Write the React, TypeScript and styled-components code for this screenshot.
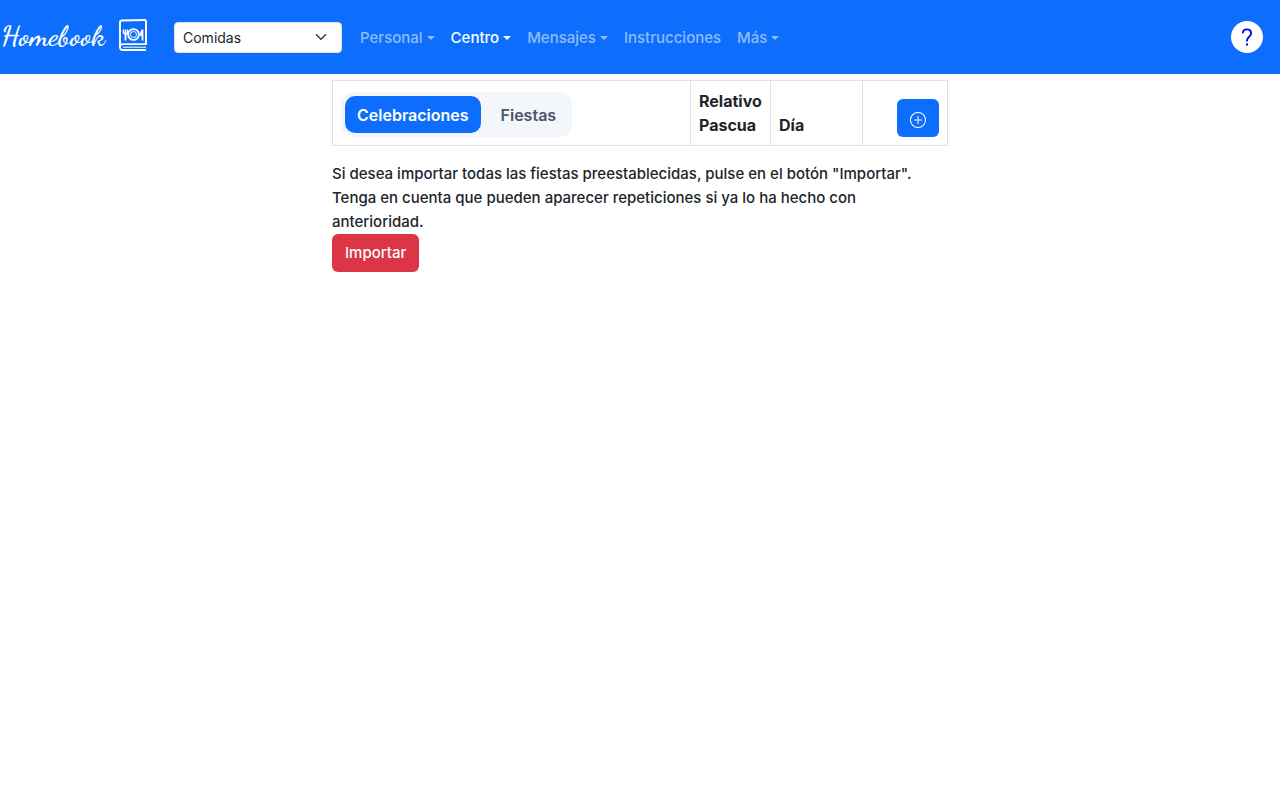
import React, { useState } from "react";
import styled, { createGlobalStyle } from "styled-components";

const GlobalStyle = createGlobalStyle`
  *, *::before, *::after { box-sizing: border-box; }
  body {
    margin: 0;
    background: #fff;
    color: #212529;
    font-family: Inter, "Liberation Sans", sans-serif;
    font-size: 15px;
    line-height: 24px;
  }
  button, select { font: inherit; }
`;

const Header = styled.header`
  display: flex;
  align-items: center;
  min-height: 74px;
  padding-right: 17px;
  background: #0d6efd;
`;

const Brand = styled.a`
  display: flex;
  align-items: center;
  gap: 14px;
  width: 174px;
  padding-left: 1px;
  flex-shrink: 0;
  color: #fff;
  text-decoration: none;
`;

const Wordmark = styled.span`
  width: 103px;
  padding-bottom: 2px;
  font-family: "Dancing Script", "Liberation Serif", cursive;
  font-size: 29px;
  font-weight: 600;
  white-space: nowrap;
`;

const SelectWrap = styled.div`
  position: relative;
  width: 168px;
  margin-right: 10px;
  svg {
    position: absolute;
    right: 15px;
    top: 9px;
    pointer-events: none;
  }
`;

const Select = styled.select`
  display: block;
  width: 100%;
  height: 31px;
  padding: 1px 36px 0 8px;
  border: 1px solid #dee2e6;
  border-radius: 4px;
  appearance: none;
  background: #fff;
  color: #212529;
  font-size: 14px;
`;

const Nav = styled.nav`
  display: flex;
  flex: 1;
`;

const NavLink = styled.a<{ $active?: boolean; $caret?: boolean }>`
  display: flex;
  align-items: center;
  gap: 4px;
  padding: 9px 8px 7px;
  color: ${(p) => (p.$active ? "#fff" : "rgba(255, 255, 255, 0.55)")};
  font-weight: 500;
  text-decoration: none;
  &::after {
    content: "";
    display: ${(p) => (p.$caret ? "block" : "none")};
    border: 4px solid transparent;
    border-top-color: currentColor;
    border-bottom: 0;
  }
`;

const HelpLink = styled.a`
  display: grid;
  place-items: center;
  width: 32px;
  height: 32px;
  border-radius: 50%;
  background: #fff;
  color: #00e;
`;

const Main = styled.main`
  width: 50%;
  min-width: 600px;
  margin: 0 auto;
  padding: 6px 12px;
`;

const Table = styled.table`
  width: 100%;
  border-collapse: collapse;
  margin-bottom: 16px;
  font-size: 16px;
`;

const Th = styled.th<{ $width?: number; $align?: string }>`
  width: ${(p) => (p.$width ? `${p.$width}px` : "auto")};
  padding: 8px;
  border: 1px solid #dee2e6;
  text-align: ${(p) => p.$align ?? "left"};
  vertical-align: bottom;
  font-weight: 700;
`;

const Segmented = styled.div`
  display: inline-flex;
  vertical-align: bottom;
  gap: 8px;
  padding: 4px;
  border-radius: 12px;
  background: #f3f6fb;
`;

const Segment = styled.button<{ $active: boolean }>`
  height: 37px;
  padding: 0 12px;
  border: 0;
  border-radius: 10px;
  background: ${(p) => (p.$active ? "#0d6efd" : "transparent")};
  color: ${(p) => (p.$active ? "#fff" : "#4a5568")};
  font-weight: 600;
`;

const Button = styled.button<{ $danger?: boolean }>`
  display: inline-flex;
  align-items: center;
  height: 38px;
  padding: 0 13px;
  border: 0;
  border-radius: 6px;
  background: ${(p) => (p.$danger ? "#dc3545" : "#0d6efd")};
  color: #fff;
  font-weight: 500;
  vertical-align: bottom;
`;

const AddButton = styled(Button)`
  padding-top: 4px;
`;

const Note = styled.p`
  margin: 0;
  padding-right: 24px;
  font-weight: 500;
`;

const BookLogo = () => (
  <svg width="30" height="38" viewBox="0 0 30 38" fill="none" stroke="#fff" strokeWidth="2" aria-hidden="true">
    <path d="M2 29V4.500q0-2 2-2L27 2Q28 2 28 3.500V26" strokeLinecap="round" />
    <path d="M28 26.200H5q-3 0-3 3t3 2.800H28" strokeWidth="1.800" />
    <path d="M5 29.200H28" strokeWidth="1" />
    <circle cx="15.500" cy="16.500" r="5.400" strokeWidth="1.900" />
    <circle cx="15.500" cy="16.500" r="3" strokeWidth="1" />
    <path d="M7.500 15v7.500M24.500 11.500v11M24.500 12q-2.500 3-1 6" strokeWidth="1.800" />
    <path d="M5.500 11.500v2.500q0 2 2 2t2-2v-2.500M7.500 11.500v4" strokeWidth="1.400" />
  </svg>
);

const menu = [
  { label: "Personal", caret: true },
  { label: "Centro", caret: true, active: true },
  { label: "Mensajes", caret: true },
  { label: "Instrucciones" },
  { label: "Más", caret: true },
];

const tabs = ["Celebraciones", "Fiestas"];

export default function App() {
  const [tab, setTab] = useState(tabs[0]);
  return (
    <>
      <GlobalStyle />
      <Header>
        <Brand href="#">
          <Wordmark>Homebook</Wordmark>
          <BookLogo />
        </Brand>
        <SelectWrap>
          <Select aria-label="Sección" defaultValue="Comidas">
            <option>Comidas</option>
          </Select>
          <svg width="12" height="12" viewBox="0 0 16 16" fill="none" stroke="#343a40" strokeWidth="2" strokeLinecap="round" strokeLinejoin="round" aria-hidden="true">
            <path d="m2 5 6 6 6-6" />
          </svg>
        </SelectWrap>
        <Nav>
          {menu.map((m) => (
            <NavLink key={m.label} href="#" $active={m.active} $caret={m.caret}>
              {m.label}
            </NavLink>
          ))}
        </Nav>
        <HelpLink href="#" aria-label="Ayuda">
          <svg width="24" height="24" viewBox="0 0 24 24" fill="none" stroke="currentColor" strokeWidth="1.800" aria-hidden="true">
            <path d="M7.700 8.400Q7.900 4.300 12 4.300t4.200 3.800q0 2-2 3.700T12 15.300v1.200" />
            <path d="M11 19.500h2" strokeWidth="2" />
          </svg>
        </HelpLink>
      </Header>
      <Main>
        <Table>
          <thead>
            <tr>
              <Th>
                <Segmented>
                  {tabs.map((t) => (
                    <Segment key={t} type="button" $active={t === tab} aria-pressed={t === tab} onClick={() => setTab(t)}>
                      {t}
                    </Segment>
                  ))}
                </Segmented>
              </Th>
              <Th $width={80}>Relativo Pascua</Th>
              <Th $width={92}>Día</Th>
              <Th $width={85} $align="right">
                <AddButton type="button" aria-label="Añadir">
                  <svg width="16" height="16" viewBox="0 0 16 16" fill="currentColor" aria-hidden="true">
                    <path d="M8 15A7 7 0 1 1 8 1a7 7 0 0 1 0 14m0 1A8 8 0 1 0 8 0a8 8 0 0 0 0 16" />
                    <path d="M8 4a.5.5 0 0 1 .5.5v3h3a.5.5 0 0 1 0 1h-3v3a.5.5 0 0 1-1 0v-3h-3a.5.5 0 0 1 0-1h3v-3A.5.5 0 0 1 8 4" />
                  </svg>
                </AddButton>
              </Th>
            </tr>
          </thead>
        </Table>
        <Note>
          Si desea importar todas las fiestas preestablecidas, pulse en el botón "Importar". Tenga en cuenta que pueden
          aparecer repeticiones si ya lo ha hecho con anterioridad.
        </Note>
        <Button type="button" $danger>
          Importar
        </Button>
      </Main>
    </>
  );
}
